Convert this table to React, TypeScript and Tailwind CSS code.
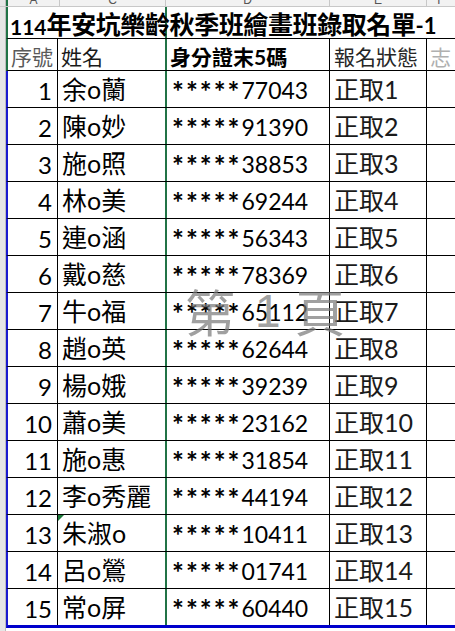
import React from "react";

const rows: [number, string, string][] = [
  [1, "余o蘭", "77043"],
  [2, "陳o妙", "91390"],
  [3, "施o照", "38853"],
  [4, "林o美", "69244"],
  [5, "連o涵", "56343"],
  [6, "戴o慈", "78369"],
  [7, "牛o福", "65112"],
  [8, "趙o英", "62644"],
  [9, "楊o娥", "39239"],
  [10, "蕭o美", "23162"],
  [11, "施o惠", "31854"],
  [12, "李o秀麗", "44194"],
  [13, "朱淑o", "10411"],
  [14, "呂o鶯", "01741"],
  [15, "常o屏", "60440"],
];

const GRID = "grid grid-cols-[50px_109px_163px_97px_1fr]";

export default function App() {
  return (
    <div className="relative w-[455px] h-[631px] overflow-hidden bg-white flex flex-col font-['Lato','Noto_Sans_CJK_TC',sans-serif] text-black">
      {/* column header strip */}
      <div className="flex h-[7px] shrink-0 overflow-hidden bg-[#f2f2f2] border-b border-[#c8c8c8] text-[12px] leading-none text-[#555] font-['Liberation_Sans',sans-serif]">
        <div className="w-[6px] bg-[#e6e6e6] border-r border-[#bdbdbd]" />
        <div className="w-[2px] bg-[#217346]" />
        <div className="w-[52px] flex items-end justify-center border-r border-[#c8c8c8]">A</div>
        <div className="w-[106px] flex items-end justify-center border-r border-[#c8c8c8]">C</div>
        <div className="w-[164px] flex items-end justify-center border-r border-[#c8c8c8]">D</div>
        <div className="w-[97px] flex items-end justify-center border-r border-[#c8c8c8]">E</div>
        <div className="flex-1 flex items-end justify-center">F</div>
      </div>

      <div className="flex flex-1">
        <div className="w-[6px] shrink-0 bg-[#e6e6e6] border-r border-[#bdbdbd]" />
        <div className="flex-1 flex flex-col">
          {/* title row */}
          <div className={`${GRID} h-[32px] border-l-2 border-l-[#217346] border-b border-b-black`}>
            <div className="col-span-2 flex items-end pb-[1px] pl-[2px] border-r-2 border-r-[#217346] whitespace-nowrap overflow-visible font-bold text-[25px] leading-none">
              <span className="text-[21px]">114</span>
              <span className="tracking-[-0.4px]">年安坑樂齡秋季班繪畫班錄取名單</span>
              <span className="text-[22px]">-1</span>
            </div>
            <div className="col-span-3" />
          </div>

          {/* header row */}
          <div className={`${GRID} h-[32px] border-l-2 border-l-[#217346] border-b border-b-black text-[21px] leading-none`}>
            <div className="flex items-end pb-[3px] pl-[3px] border-r border-r-black text-[#595959]">序號</div>
            <div className="flex items-end pb-[3px] pl-[3px] border-r-2 border-r-[#217346] text-[#1a1a1a]">姓名</div>
            <div className="flex items-end pb-[3px] pl-[3px] border-r border-r-black font-bold whitespace-nowrap">
              身分證末<span className="text-[21px]">5</span>碼
            </div>
            <div className="flex items-end pb-[3px] pl-[4px] border-r border-r-black text-[#262626]">報名狀態</div>
            <div className="flex items-end pb-[3px] pl-[3px] text-[#b0b0b0] whitespace-nowrap overflow-hidden">志</div>
          </div>

          {/* data rows */}
          {rows.map(([n, name, id], i) => {
            const last = i === rows.length - 1;
            return (
              <div
                key={n}
                className={`${GRID} ${last ? "h-[39px] border-b-[3px] border-b-[#0000cc]" : "h-[37px] border-b border-b-black"} border-l-2 border-l-[#1a1ad0] leading-none`}
              >
                <div className="flex items-center justify-end pr-[5px] pt-[3px] border-r border-r-black text-[24px]">
                  {n}
                </div>
                <div className="relative flex items-center pl-[4px] border-r-2 border-r-[#217346] text-[25px] whitespace-nowrap">
                  {n === 13 && (
                    <div className="absolute top-0 left-0 w-0 h-0 border-t-[6px] border-r-[6px] border-t-[#1e7b3c] border-r-transparent" />
                  )}
                  {name}
                </div>
                <div className="flex items-center pl-[5px] pt-[3px] border-r border-r-black text-[23px] whitespace-nowrap">
                  <span className="text-[28px] font-bold tracking-[2px]">*****</span>
                  {id}
                </div>
                <div className="flex items-center pl-[4px] border-r border-r-black text-[25px] whitespace-nowrap text-[#1a1a1a]">
                  正取{n}
                </div>
                <div />
              </div>
            );
          })}
        </div>
      </div>

      {/* watermark */}
      <div className="absolute left-[185px] top-[285px] flex items-start text-[50px] leading-none text-[rgba(120,120,120,0.7)] font-['Noto_Sans_CJK_TC',sans-serif] pointer-events-none">
        <span className="w-[62px]">第</span>
        <span className="w-[48px] font-['Liberation_Sans',sans-serif] text-[46px] pl-[8px] pt-[3px]">1</span>
        <span>頁</span>
      </div>
    </div>
  );
}
